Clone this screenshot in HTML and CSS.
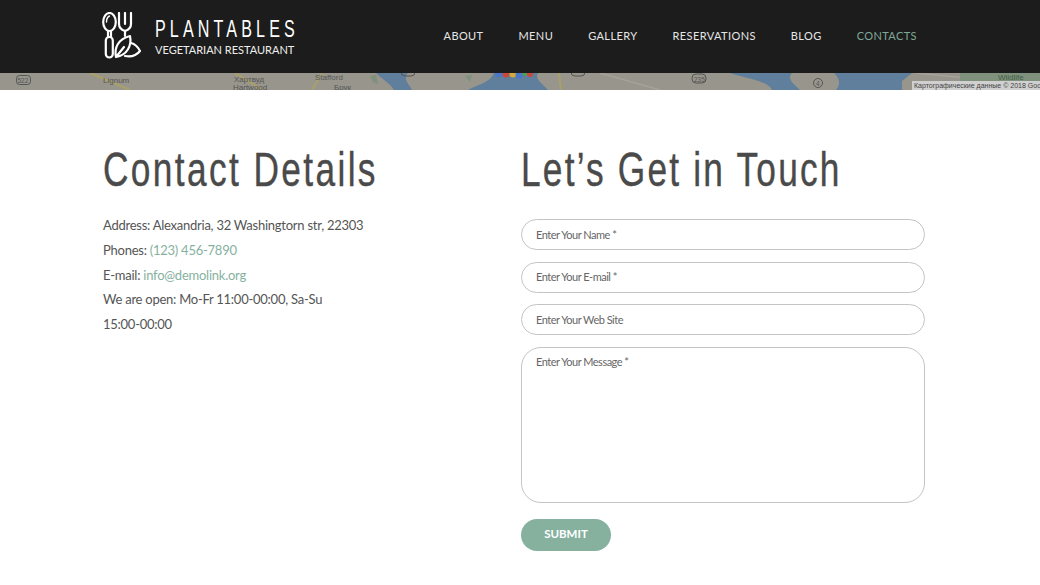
FILE: index.html
```html
<!DOCTYPE html>
<html lang="en">
<head>
    <meta charset="UTF-8">
    <meta name="viewport" content="width=device-width, initial-scale=1.0">
    <title>Plantables</title>
    <link rel="stylesheet" href="styles.css">
</head>
<body>
    <header class="site-header">
        <a class="brand" href="#">
            <svg class="brand-icon" width="40" height="48" viewBox="0 0 40 48" fill="none" stroke="#fff" stroke-width="2.200" stroke-linecap="round" stroke-linejoin="round">
                <ellipse cx="7.500" cy="10" rx="6.300" ry="9"/>
                <path d="M4.500 10c0-3 1-5 3-6" stroke-width="1.400"/>
                <path d="M6 19v6M9 19v6"/>
                <rect x="3.800" y="25" width="7" height="20.500" rx="3.500"/>
                <path d="M17 1v11c0 4 3 6 6 7v5M29 1v11c0 4-3 6-6 7M23 1v11"/>
                <path d="M14 45c-2-9 2-18 14-21 2 10-3 19-14 21zM14 45l8-10"/>
                <path d="M29 31c4 1 7 4 9 8-4 5-10 6-15 5"/>
            </svg>
            <span class="brand-text">
                <span class="brand-name">PLANTABLES</span>
                <span class="brand-sub">VEGETARIAN RESTAURANT</span>
            </span>
        </a>
        <nav class="main-nav">
            <a href="#">About</a>
            <a href="#">Menu</a>
            <a href="#">Gallery</a>
            <a href="#">Reservations</a>
            <a href="#">Blog</a>
            <a href="#" class="active">Contacts</a>
        </nav>
    </header>

    <div class="map">
        <svg width="1040" height="17" viewBox="0 0 1040 17" font-family="Liberation Sans, sans-serif" font-size="8" fill="#555">
            <path d="M0 0H1040V17H0Z" fill="#98958c"/>
            <path d="M468 17 C476 12 490 10 494 0 H538 C534 6 544 12 548 17Z" fill="#5f7f9c"/>
            <path d="M376 0 H408 C402 6 410 12 412 17 H394 C390 10 382 6 376 0Z" fill="#5f7f9c"/>
            <path d="M730 0 H792 C786 6 795 12 800 17 H772 C768 8 748 6 730 0Z" fill="#5f7f9c"/>
            <path d="M834 0 H912 L902 8 V17 H836 C842 10 838 4 834 0Z" fill="#5f7f9c"/>
            <path d="M90 0 L130 17 M235 0 L262 17 M312 17 L322 0 M559 0 L561 17" stroke="#a9a069" stroke-width="2" fill="none"/>
            <path d="M600 0 L660 17 M915 0 L1040 12" stroke="#a5a29b" stroke-width="1.500" fill="none"/>
            <path d="M960 0 H1040 V8 H960Z" fill="#7f917c"/>
            <path d="M370 3 L376 2 L378 11 L373 9Z M465 3 L472 2 L470 9Z" fill="#7f917c"/>
            <g fill="none" stroke="#555">
                <rect x="16.500" y="2.500" width="14" height="9" rx="3"/>
                <rect x="401" y="-6" width="14" height="9" rx="4"/>
                <rect x="571" y="-6" width="14" height="9" rx="4"/>
                <rect x="692" y="1" width="14" height="9" rx="4"/>
                <circle cx="818" cy="10" r="4.500"/>
            </g>
            <text x="17.500" y="10" font-size="6.500">522</text>
            <text x="694" y="8.500" font-size="6.500">235</text>
            <text x="816" y="12.500" font-size="6.500">4</text>
            <text x="103" y="10">Lignum</text>
            <text x="234" y="8.500">Хартвуд</text>
            <text x="233" y="16.500">Hartwood</text>
            <text x="315" y="6.500">Stafford</text>
            <text x="334" y="16.500">Брук</text>
            <text x="998" y="6.500" fill="#3f5f45">Wildlife</text>
            <g>
                <circle cx="499" cy="0" r="4" fill="#4a76c9"/>
                <circle cx="506" cy="1" r="3.500" fill="#c9483c"/>
                <circle cx="513" cy="1" r="3.500" fill="#d2a93a"/>
                <circle cx="519" cy="2" r="3.500" fill="#4a76c9"/>
                <circle cx="525" cy="0" r="3" fill="#4d9e57"/>
                <circle cx="530" cy="1" r="3" fill="#c9483c"/>
            </g>
        </svg>
        <span class="map-credit">Картографические данные © 2018 Google</span>
    </div>

    <main class="contacts">
        <section class="details">
            <h2>Contact Details</h2>
            <p>Address: Alexandria, 32 Washingtorn str, 22303</p>
            <p>Phones: <a href="#">(123) 456-7890</a></p>
            <p>E-mail: <a href="#">info@demolink.org</a></p>
            <p>We are open: Mo-Fr 11:00-00:00, Sa-Su <span class="nowrap">15:00-00:00</span></p>
        </section>
        <section class="touch">
            <h2>Let’s Get in Touch</h2>
            <form class="contact-form">
                <input type="text" placeholder="Enter Your Name *">
                <input type="text" placeholder="Enter Your E-mail *">
                <input type="text" placeholder="Enter Your Web Site">
                <textarea placeholder="Enter Your Message *"></textarea>
                <button type="submit">Submit</button>
            </form>
        </section>
    </main>
</body>
</html>
```

FILE: styles.css
```css
body {
    margin: 0;
    background: #fff;
    color: #555;
    font-family: Lato, "Open Sans", sans-serif;
    font-size: 13px;
}
a {
    text-decoration: none;
}
.nowrap {
    white-space: nowrap;
}
.site-header {
    height: 73px;
    box-sizing: border-box;
    padding: 12px 123px 0 102px;
    display: flex;
    justify-content: space-between;
    background: #1c1c1c;
}
.brand {
    display: flex;
    gap: 13px;
    height: 48px;
    color: #fff;
}
.brand-text {
    display: flex;
    flex-direction: column;
}
.brand-name {
    margin-top: 3px;
    font-family: "Liberation Sans", sans-serif;
    font-size: 23px;
    line-height: 28px;
    letter-spacing: 5.900px;
    white-space: nowrap;
    transform: scaleX(0.7);
    transform-origin: left;
    width: 142px;
}
.brand-sub {
    font-size: 11px;
    line-height: 14px;
    white-space: nowrap;
    color: #eee;
}
.main-nav {
    display: flex;
    gap: 35px;
    padding-top: 16px;
}
.main-nav a {
    color: #e6e6e6;
    font-size: 11px;
    line-height: 16px;
    letter-spacing: 0.400px;
    text-transform: uppercase;
}
.main-nav a.active {
    color: #7fa796;
}
.map {
    position: relative;
    height: 17px;
    overflow: hidden;
}
.map svg {
    display: block;
}
.map-credit {
    position: absolute;
    top: 8px;
    left: 912px;
    width: 128px;
    height: 9px;
    padding-left: 2px;
    background: #d0d0d0;
    color: #444;
    font-family: "Liberation Sans", sans-serif;
    font-size: 7px;
    line-height: 9px;
    white-space: nowrap;
    overflow: hidden;
}
.contacts {
    display: flex;
    padding: 0 115px 34px 103px;
}
.details {
    width: 418px;
    box-sizing: border-box;
    padding-right: 148px;
}
.touch {
    flex: 1;
}
h2 {
    margin: 50px 0 0;
    font-family: "Liberation Sans", sans-serif;
    font-size: 49px;
    font-weight: 400;
    line-height: 58px;
    letter-spacing: 3.300px;
    white-space: nowrap;
    color: #4a4a4a;
    -webkit-text-stroke: 0.400px #4a4a4a;
    transform: scaleX(0.72);
    transform-origin: left;
}
.touch h2 {
    letter-spacing: 3.050px;
}
.details p {
    margin: 0;
    letter-spacing: -0.250px;
    line-height: 24.800px;
}
.details p:first-of-type {
    margin-top: 15px;
}
.details a {
    color: #86b19f;
}
.contact-form {
    display: flex;
    flex-direction: column;
    align-items: flex-start;
    gap: 11.600px;
    margin-top: 21px;
}
.contact-form input,
.contact-form textarea {
    width: 404px;
    box-sizing: border-box;
    padding: 0 14px 1px;
    border: 1px solid #c4c4c4;
    border-radius: 16px;
    font-family: Lato, sans-serif;
    font-size: 11px;
    letter-spacing: -0.500px;
    color: #666;
    outline: none;
}
.contact-form input {
    height: 31px;
}
.contact-form textarea {
    height: 156.400px;
    padding-top: 7px;
    border-radius: 20px;
    resize: none;
}
.contact-form ::placeholder {
    color: #666;
    opacity: 1;
}
.contact-form button {
    width: 90px;
    height: 32px;
    margin-top: 4.200px;
    padding: 0 0 2px;
    border: 0;
    border-radius: 16px;
    background: #86b19f;
    color: #fff;
    font-family: Lato, sans-serif;
    font-size: 11.500px;
    font-weight: 700;
    text-transform: uppercase;
}
```
